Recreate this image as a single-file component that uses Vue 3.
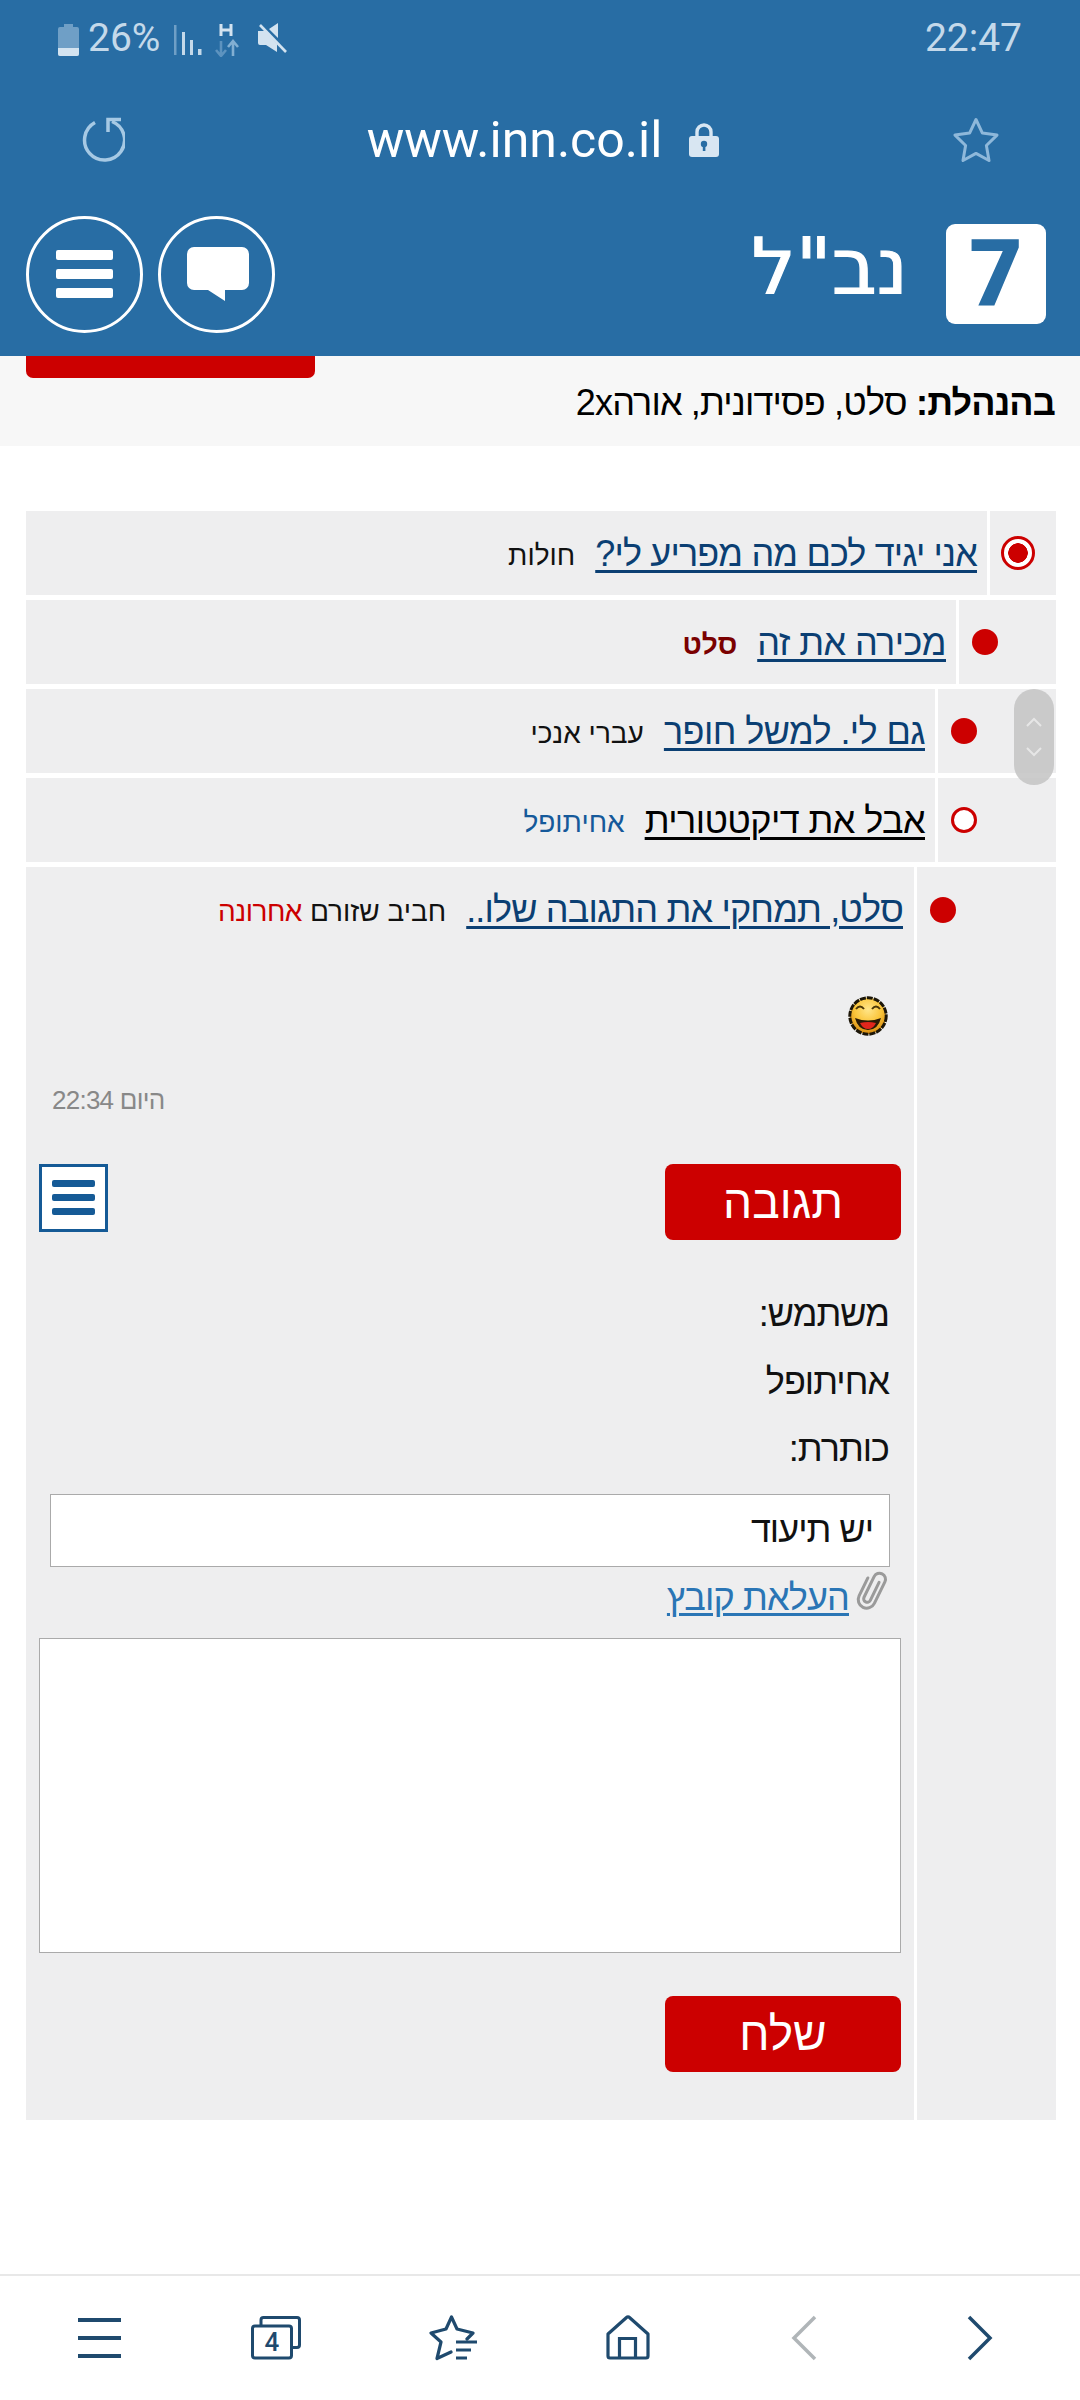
<script setup>
const threads = [
  { depth: 66, mark: 'current', title: 'אני יגיד לכם מה מפריע לי?', meta: 'חולות', metaClass: 'm-plain', tight: true },
  { depth: 97, mark: 'full', title: 'מכירה את זה', meta: 'סלט', metaClass: 'm-bold' },
  { depth: 118, mark: 'full', title: 'גם לי. למשל חופר', meta: 'עברי אנכי', metaClass: 'm-plain' },
  { depth: 118, mark: 'hollow', title: 'אבל את דיקטטורית', meta: 'אחיתופל', metaClass: 'm-blue', dark: true }
]
</script>

<template>
  <div class="page">
    <header class="top">
      <div class="status">
        <div class="status-left">
          <svg class="batt" width="21" height="32" viewBox="0 0 21 32">
            <path d="M6 0h9v3h4a2 2 0 0 1 2 2v25a2 2 0 0 1-2 2H2a2 2 0 0 1-2-2V5a2 2 0 0 1 2-2h4z" fill="#6f9fc6" />
            <path d="M0 24h21v6a2 2 0 0 1-2 2H2a2 2 0 0 1-2-2z" fill="#d3e3f0" />
          </svg>
          <span class="pct">26%</span>
          <svg class="sig" width="28" height="30" viewBox="0 0 28 30">
            <rect x="0" y="0" width="2.5" height="30" fill="#6f9fc6" />
            <rect x="8" y="7" width="3" height="23" fill="#c4d9ea" />
            <rect x="16" y="15" width="3" height="15" fill="#c4d9ea" />
            <rect x="24" y="24" width="3.5" height="6" fill="#c4d9ea" />
          </svg>
          <svg class="net" width="24" height="34" viewBox="0 0 24 34">
            <path d="M6 1v12M16 1v12M6 7h10" stroke="#d3e3f0" stroke-width="3" fill="none" />
            <path d="M6 18v14M1 27l5 6 5-6" stroke="#5d93bf" stroke-width="2.6" fill="none" />
            <path d="M18 33V19M13 24l5-6 5 6" stroke="#82afd2" stroke-width="2.6" fill="none" />
          </svg>
          <svg class="mute" width="30" height="32" viewBox="0 0 30 32">
            <path d="M0 9h7l3 3 9 10v8l-11-7H2a2 2 0 0 1-2-2zM11 7l9-6v15z" fill="#d3e3f0" />
            <path d="M2 3l26 27" stroke="#d3e3f0" stroke-width="2.6" />
          </svg>
        </div>
        <span class="clock">22:47</span>
      </div>

      <div class="urlbar">
        <svg class="reload" width="46" height="46" viewBox="0 0 46 46" fill="none">
          <path d="M16 6.5A20 20 0 1 0 33 5.5" stroke="#a6c9e4" stroke-width="3.5" />
          <path d="M29 16V3.5h13" stroke="#a6c9e4" stroke-width="3.5" />
        </svg>
        <div class="url">
          <span>www.inn.co.il</span>
          <svg width="30" height="34" viewBox="0 0 30 34">
            <path d="M8 14V9a7 7 0 0 1 14 0v5" fill="none" stroke="#d8e6f2" stroke-width="3.4" />
            <rect x="0" y="13" width="30" height="21" rx="3" fill="#d8e6f2" />
            <circle cx="15" cy="21" r="3.2" fill="#286da4" />
            <rect x="13.8" y="22" width="2.6" height="6" fill="#286da4" />
          </svg>
        </div>
        <svg width="46" height="46" viewBox="0 0 46 46" fill="none">
          <path d="M23 2.5l6.4 13.6 14.6 2-10.6 10.4 2.6 15L23 36.4 10 43.5l2.600-15L2 18.100l14.600-2z" stroke="#8eb8da" stroke-width="3" stroke-linejoin="round" />
        </svg>
      </div>

      <div class="brand">
        <div class="round-btns">
          <div class="round">
            <div class="burger"><i></i><i></i><i></i></div>
          </div>
          <div class="round">
            <svg width="62" height="54" viewBox="0 0 62 54">
              <path d="M7 0h48a7 7 0 0 1 7 7v29a7 7 0 0 1-7 7H38v11L21 43H7a7 7 0 0 1-7-7V7a7 7 0 0 1 7-7z" fill="#fff" />
            </svg>
          </div>
        </div>
        <div class="logo">
          <span class="logo-name">נב<i>"</i>ל</span>
          <span class="logo-box">7</span>
        </div>
      </div>
    </header>

    <main class="main">
      <section class="mods">
        <div class="red-tab"></div>
        <p class="mods-text"><b>בהנהלת:</b> סלט, פסידונית, אורה2x</p>
      </section>

      <section class="threads">
        <div v-for="t in threads" :key="t.title" class="row">
          <div class="side" :style="{ width: t.depth + 'px' }">
            <span class="mark" :class="t.mark"></span>
          </div>
          <div class="cell">
            <a class="link" :class="{ dark: t.dark, tight: t.tight }">{{ t.title }}</a>
            <span class="meta" :class="t.metaClass">{{ t.meta }}</span>
          </div>
        </div>

        <div class="row">
          <div class="side side-top" :style="{ width: '139px' }">
            <span class="mark full"></span>
          </div>
          <div class="post">
            <div class="post-head">
              <a class="link tight">סלט, תמחקי את התגובה שלו..</a>
              <span class="meta m-plain">חביב שזורם</span>
              <span class="meta m-red">אחרונה</span>
            </div>

            <svg class="smiley" width="40" height="40" viewBox="0 0 40 40">
              <defs>
                <radialGradient id="sm" cx="50%" cy="32%" r="62%">
                  <stop offset="0" stop-color="#ffe68a" />
                  <stop offset="0.6" stop-color="#fac53a" />
                  <stop offset="1" stop-color="#dd9416" />
                </radialGradient>
              </defs>
              <circle cx="20" cy="20" r="18.200" fill="url(#sm)" stroke="#1c1608" stroke-width="3" stroke-dasharray="6 1" />
              <path d="M8 13q4-5 8 0M24 13q4-5 8 0" fill="none" stroke="#4a3608" stroke-width="2" />
              <path d="M7 22q13 5 26 0q-3 12-13 12T7 22z" fill="#2a1a06" />
              <path d="M12 27q8-2 16 0q-3 6-8 6t-8-6z" fill="#e2261c" />
            </svg>

            <div class="when">היום 22:34</div>

            <div class="actions">
              <button class="red-btn" type="button">תגובה</button>
              <div class="tool-menu"><i></i><i></i><i></i></div>
            </div>

            <div class="label">משתמש:</div>
            <div class="label">אחיתופל</div>
            <div class="label">כותרת:</div>

            <input class="subject" type="text" value="יש תיעוד" />

            <div class="upload">
              <svg width="36" height="46" viewBox="0 0 36 46" fill="none">
                <path d="M21 13v20a3.500 3.500 0 0 1-7 0V10a6 6 0 0 1 12 0v24a8.500 8.500 0 0 1-17 0V14" stroke="#9a9a9a" stroke-width="3" stroke-linecap="round" transform="rotate(26 18 23)" />
              </svg>
              <a class="upload-link">העלאת קובץ</a>
            </div>

            <textarea class="body-input"></textarea>

            <button class="red-btn send" type="button">שלח</button>
          </div>
        </div>
      </section>
    </main>

    <nav class="bottom">
      <div class="tab">
        <svg width="44" height="40" viewBox="0 0 44 40"><path d="M0 2h43M0 20h43M0 38h43" stroke="#1f4a6e" stroke-width="4" fill="none" /></svg>
      </div>
      <div class="tab">
        <svg width="50" height="44" viewBox="0 0 50 44" fill="none">
          <path d="M10 9V4a2.500 2.500 0 0 1 2.500-2.500H46A2.500 2.500 0 0 1 48.500 4v25a2.500 2.500 0 0 1-2.500 2.500h-5" stroke="#1f4a6e" stroke-width="3" />
          <rect x="1.500" y="10" width="39" height="32" rx="2.500" fill="#fff" stroke="#1f4a6e" stroke-width="3" />
          <text x="21" y="35" text-anchor="middle" class="tab-num">4</text>
        </svg>
      </div>
      <div class="tab tab-star">
        <svg width="50" height="46" viewBox="0 0 50 46" fill="none">
          <path d="M22 37L8 43.500 12 27 2 18l15-4 5.500-12L28 14l16 4-6 6" stroke="#1f4a6e" stroke-width="3.200" stroke-linejoin="round" stroke-linecap="round" />
          <path d="M27 27h21M27 35h15M27 43h11" stroke="#1f4a6e" stroke-width="3.200" />
        </svg>
      </div>
      <div class="tab">
        <svg width="44" height="46" viewBox="0 0 44 46" fill="none">
          <path d="M2 19L20.500 2.500a2 2 0 0 1 3 0L42 19v22a2 2 0 0 1-2 2H4a2 2 0 0 1-2-2z" stroke="#1f4a6e" stroke-width="3.200" stroke-linejoin="round" />
          <path d="M13.500 43V23.500h16V43" stroke="#1f4a6e" stroke-width="3.200" />
        </svg>
      </div>
      <div class="tab">
        <svg width="26" height="46" viewBox="0 0 26 46"><path d="M24 2L3 23l21 21" stroke="#b0b5b8" stroke-width="3.500" fill="none" /></svg>
      </div>
      <div class="tab">
        <svg width="26" height="46" viewBox="0 0 26 46"><path d="M2 2l21 21L2 44" stroke="#1f4a6e" stroke-width="3.500" fill="none" /></svg>
      </div>
    </nav>

    <div class="thumb" aria-hidden="true">
      <svg width="20" height="12" viewBox="0 0 20 12"><path d="M3 10l7-7 7 7" stroke="#e6e6e6" stroke-width="2" fill="none" /></svg>
      <svg width="20" height="12" viewBox="0 0 20 12"><path d="M3 2l7 7 7-7" stroke="#e6e6e6" stroke-width="2" fill="none" /></svg>
    </div>
  </div>
</template>

<style scoped>
.page {
  position: relative;
  width: 1080px;
  height: 2400px;
  display: flex;
  flex-direction: column;
  background: #fff;
  overflow: hidden;
  font-family: "Liberation Sans", Arial, sans-serif;
  color: #000;
}

/* header */
.top {
  background: #286da4;
  height: 356px;
  flex: none;
}
.status {
  height: 76px;
  padding: 0 58px;
  display: flex;
  align-items: center;
  justify-content: space-between;
  color: #c4d9ea;
  font-family: Roboto, sans-serif;
}
.status-left {
  display: flex;
  align-items: center;
}
.batt { margin-top: 4px; }
.pct {
  font-size: 39px;
  margin-left: 9px;
  line-height: 1;
}
.sig { margin-left: 14px; margin-top: 3px; }
.net { margin-left: 13px; margin-top: 3px; }
.mute { margin-left: 19px; }
.clock { font-size: 39px; line-height: 1; }

.urlbar {
  height: 128px;
  padding: 0 81px 0 82px;
  display: flex;
  align-items: center;
  justify-content: space-between;
}
.reload { margin: -3px 0 0 -3px; }
.url {
  display: flex;
  align-items: center;
  gap: 27px;
  margin-left: 8px;
  color: #fff;
  font-family: Roboto, sans-serif;
  font-size: 50px;
  line-height: 1;
}

.brand {
  height: 152px;
  box-sizing: border-box;
  padding: 0 34px 12px 26px;
  display: flex;
  align-items: center;
  justify-content: space-between;
}
.round-btns { display: flex; gap: 15px; }
.round {
  width: 117px;
  height: 117px;
  box-sizing: border-box;
  border: 3px solid #fff;
  border-radius: 50%;
  display: flex;
  align-items: center;
  justify-content: center;
}
.round svg { margin-left: 2px; }
.burger {
  width: 57px;
  display: flex;
  flex-direction: column;
  gap: 9px;
}
.burger i {
  display: block;
  height: 10px;
  border-radius: 2px;
  background: #fff;
}
.logo {
  display: flex;
  align-items: center;
  gap: 38px;
}
.logo-name {
  direction: rtl;
  color: #fff;
  font-family: "DejaVu Sans", sans-serif;
  font-size: 78px;
  line-height: 1;
  margin-top: -14px;
  -webkit-text-stroke: 1.2px #fff;
}
.logo-name i { font-style: italic; }
.logo-box {
  width: 100px;
  height: 100px;
  background: #fff;
  border-radius: 9px;
  color: #286da4;
  font-family: Roboto, sans-serif;
  font-weight: 900;
  font-size: 92px;
  line-height: 100px;
  text-align: center;
}

/* main */
.main { flex: 1; min-height: 0; }
.mods {
  position: relative;
  height: 90px;
  background: #f7f7f7;
  direction: rtl;
  display: flex;
  align-items: center;
}
.red-tab {
  position: absolute;
  left: 26px;
  top: 0;
  width: 289px;
  height: 22px;
  background: #cc0000;
  border-radius: 0 0 7px 7px;
}
.mods-text {
  margin: 3px 0 0;
  padding-right: 25px;
  font-size: 36px;
  line-height: 1;
  letter-spacing: -0.85px;
}

.threads {
  margin: 65px 24px 0 26px;
  display: flex;
  flex-direction: column;
  gap: 5px;
  direction: rtl;
}
.row {
  display: flex;
  gap: 3px;
}
.side {
  flex: none;
  background: #eeeeef;
  display: flex;
  align-items: center;
  justify-content: flex-end;
  padding-left: 13px;
  box-sizing: border-box;
  min-height: 84px;
}
.side-top {
  align-items: flex-start;
  padding-top: 30px;
}
.cell {
  flex: 1;
  height: 84px;
  box-sizing: border-box;
  padding-top: 2px;
  background: #eeeeef;
  display: flex;
  align-items: center;
  padding-right: 10px;
  white-space: nowrap;
}
.mark {
  display: block;
  box-sizing: border-box;
  width: 26px;
  height: 26px;
  border-radius: 50%;
}
.mark.full { background: #cc0000; }
.mark.hollow { border: 3px solid #cc0000; background: #fff; }
.mark.current {
  width: 34px;
  height: 34px;
  border: 3px solid #cc0000;
  background: radial-gradient(circle, #cc0000 0 9.5px, #fff 10px);
  margin-left: -2px;
}
.link {
  font-size: 36px;
  line-height: 44px;
  letter-spacing: -0.58px;
  color: #0b3f73;
  text-decoration: underline;
  text-decoration-thickness: 3px;
  text-underline-offset: 4px;
  white-space: nowrap;
}
.link.tight { letter-spacing: -0.85px; }
.link.dark { color: #000; }
.meta {
  font-size: 28px;
  margin-right: 20px;
  line-height: 44px;
  padding-top: 4px;
}
.m-plain { color: #111; }
.m-bold { color: #7a0000; font-weight: 700; }
.m-blue { color: #15599a; }
.m-red { color: #cc0000; margin-right: 8px; letter-spacing: -0.5px; }

/* open post */
.post {
  flex: 1;
  background: #eeeeef;
  padding: 0 13px 48px;
}
.post-head {
  height: 84px;
  box-sizing: border-box;
  padding-top: 2px;
  display: flex;
  align-items: center;
  margin-left: -13px;
  white-space: nowrap;
}
.post-head .link { margin-right: -2px; }
.smiley {
  display: block;
  margin: 45px 13px 0 0;
}
.when {
  margin: 49px 13px 0;
  height: 30px;
  line-height: 30px;
  font-size: 26px;
  letter-spacing: -0.75px;
  color: #888;
  text-align: left;
}
.actions {
  margin-top: 49px;
  display: flex;
  justify-content: space-between;
  align-items: flex-start;
}
.red-btn {
  display: block;
  width: 236px;
  height: 76px;
  padding: 0;
  border: 0;
  border-radius: 8px;
  background: #cc0000;
  color: #fff;
  font-family: "Liberation Sans", Arial, sans-serif;
  font-size: 46px;
  line-height: 76px;
  text-align: center;
}
.tool-menu {
  width: 69px;
  height: 68px;
  box-sizing: border-box;
  border: 3px solid #155a96;
  background: #fff;
  padding: 13px 10px 0;
}
.tool-menu i {
  display: block;
  height: 7px;
  margin-bottom: 7px;
  border-radius: 2px;
  background: #155a96;
}
.label {
  padding-right: 12px;
  height: 67.5px;
  line-height: 67.5px;
  font-size: 36px;
  letter-spacing: -1px;
  color: #111;
}
.actions + .label { margin-top: 40px; }
.subject {
  display: block;
  box-sizing: border-box;
  width: 840px;
  height: 73px;
  margin: 11px 11px 0;
  padding: 0 16px;
  border: 1px solid #aaa;
  border-radius: 0;
  background: #fff;
  font-family: "Liberation Sans", Arial, sans-serif;
  font-size: 36px;
  letter-spacing: -1px;
  color: #111;
  direction: rtl;
  outline: none;
}
.upload {
  height: 71px;
  padding-right: 11px;
  display: flex;
  align-items: flex-start;
  gap: 5px;
}
.upload svg { margin-top: 0; }
.upload-link {
  margin-top: 9px;
  font-size: 36px;
  line-height: 44px;
  letter-spacing: -0.85px;
  color: #2a75b5;
  text-decoration: underline;
  text-decoration-thickness: 3px;
  text-underline-offset: 3px;
}
.body-input {
  display: block;
  box-sizing: border-box;
  width: 862px;
  height: 315px;
  margin: 0;
  padding: 0;
  border: 1px solid #aaa;
  background: #fff;
  resize: none;
  outline: none;
}
.send { margin-top: 43px; }

/* bottom bar */
.bottom {
  flex: none;
  height: 126px;
  box-sizing: border-box;
  border-top: 2px solid #e8e8e8;
  padding: 0 12px;
  display: grid;
  grid-template-columns: repeat(6, 176px);
  align-items: center;
  background: #fff;
}
.tab {
  display: flex;
  align-items: center;
  justify-content: center;
}
.tab-star { padding-left: 4px; }
.tab-num {
  font-family: Roboto, sans-serif;
  font-size: 26px;
  font-weight: 500;
  fill: #1f4a6e;
}

/* scrollbar handle */
.thumb {
  position: absolute;
  left: 1014px;
  top: 689px;
  width: 40px;
  height: 96px;
  border-radius: 20px;
  background: rgba(195, 195, 195, 0.85);
  display: flex;
  flex-direction: column;
  align-items: center;
  justify-content: center;
  gap: 18px;
}
</style>

<style>
html, body { margin: 0; background: #fff; }
</style>
